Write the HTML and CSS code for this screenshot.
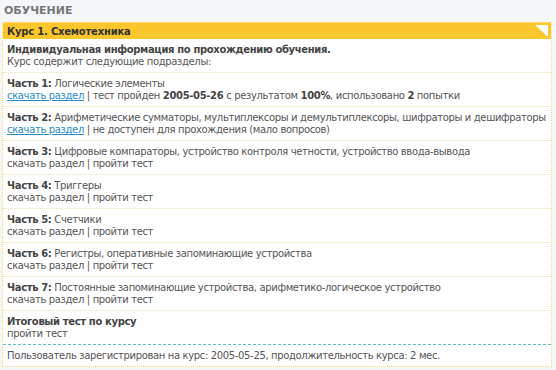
FILE: index.html
```html
<!DOCTYPE html>
<html lang="ru">
<head>
    <meta charset="UTF-8">
    <title>Обучение</title>
    <link rel="stylesheet" href="styles.css">
</head>
<body>

    <!-- Section title -->
    <h1 class="page-title">ОБУЧЕНИЕ</h1>

    <!-- Course card -->
    <div class="course">
        <div class="course-head">
            <span>Курс 1. Схемотехника</span>
            <svg class="corner" width="13" height="12" viewBox="0 0 13 12"><polygon points="0,0 13,0 13,12" fill="#fff"/></svg>
        </div>

        <div class="course-row">
            <b>Индивидуальная информация по прохождению обучения.</b><br>
            Курс содержит следующие подразделы:
        </div>

        <div class="course-row">
            <b>Часть 1:</b> Логические элементы<br>
            <a href="#">скачать раздел</a> | тест пройден <b>2005-05-26</b> с результатом <b>100%</b>, использовано <b>2</b> попытки
        </div>

        <div class="course-row">
            <b>Часть 2:</b> Арифметические сумматоры, мультиплексоры и демультиплексоры, шифраторы и дешифраторы<br>
            <a href="#">скачать раздел</a> | не доступен для прохождения (мало вопросов)
        </div>

        <div class="course-row">
            <b>Часть 3:</b> Цифровые компараторы, устройство контроля четности, устройство ввода-вывода<br>
            скачать раздел | пройти тест
        </div>

        <div class="course-row">
            <b>Часть 4:</b> Триггеры<br>
            скачать раздел | пройти тест
        </div>

        <div class="course-row">
            <b>Часть 5:</b> Счетчики<br>
            скачать раздел | пройти тест
        </div>

        <div class="course-row">
            <b>Часть 6:</b> Регистры, оперативные запоминающие устройства<br>
            скачать раздел | пройти тест
        </div>

        <div class="course-row">
            <b>Часть 7:</b> Постоянные запоминающие устройства, арифметико-логическое устройство<br>
            скачать раздел | пройти тест
        </div>

        <div class="course-row course-final">
            <b>Итоговый тест по курсу</b><br>
            пройти тест
        </div>

        <div class="course-foot">
            Пользователь зарегистрирован на курс: 2005-05-25, продолжительность курса: 2 мес.
        </div>
    </div>

</body>
</html>
```

FILE: styles.css
```css
body {
    font-family: "DejaVu Sans", Verdana, sans-serif;
    font-size: 10px;
    letter-spacing: -0.35px;
    background: #f4f7fa;
    color: #555;
    margin: 0;
    padding: 4px 4px 0 2px;
}

/* Title */
.page-title {
    font-size: 11px;
    font-weight: bold;
    color: #777;
    letter-spacing: 0;
    margin: 0 0 4px 2px;
    line-height: 14px;
}

/* Course card */
.course {
    width: 548px;
    background: #fff;
    border: 1px dotted #f0d770;
    border-top: none;
}

.course-head {
    display: flex;
    justify-content: space-between;
    align-items: flex-start;
    background: #fcc62d;
    border-top: 1px dotted #fde49a;
    color: #333;
    font-weight: bold;
    letter-spacing: -0.2px;
    padding: 2px 3px 1px 4px;
    line-height: 13px;
}

.course-row {
    padding: 5px 2px 4px 4px;
    line-height: 12px;
    white-space: nowrap;
    border-bottom: 1px dotted #efe3a8;
}

.course-row b {
    color: #444;
}

.course-row a {
    color: #2a8cc4;
}

.course-final {
    border-bottom: 1px dashed #66b8cc;
}

.course-foot {
    padding: 5px 4px 4px;
    line-height: 12px;
}
```
